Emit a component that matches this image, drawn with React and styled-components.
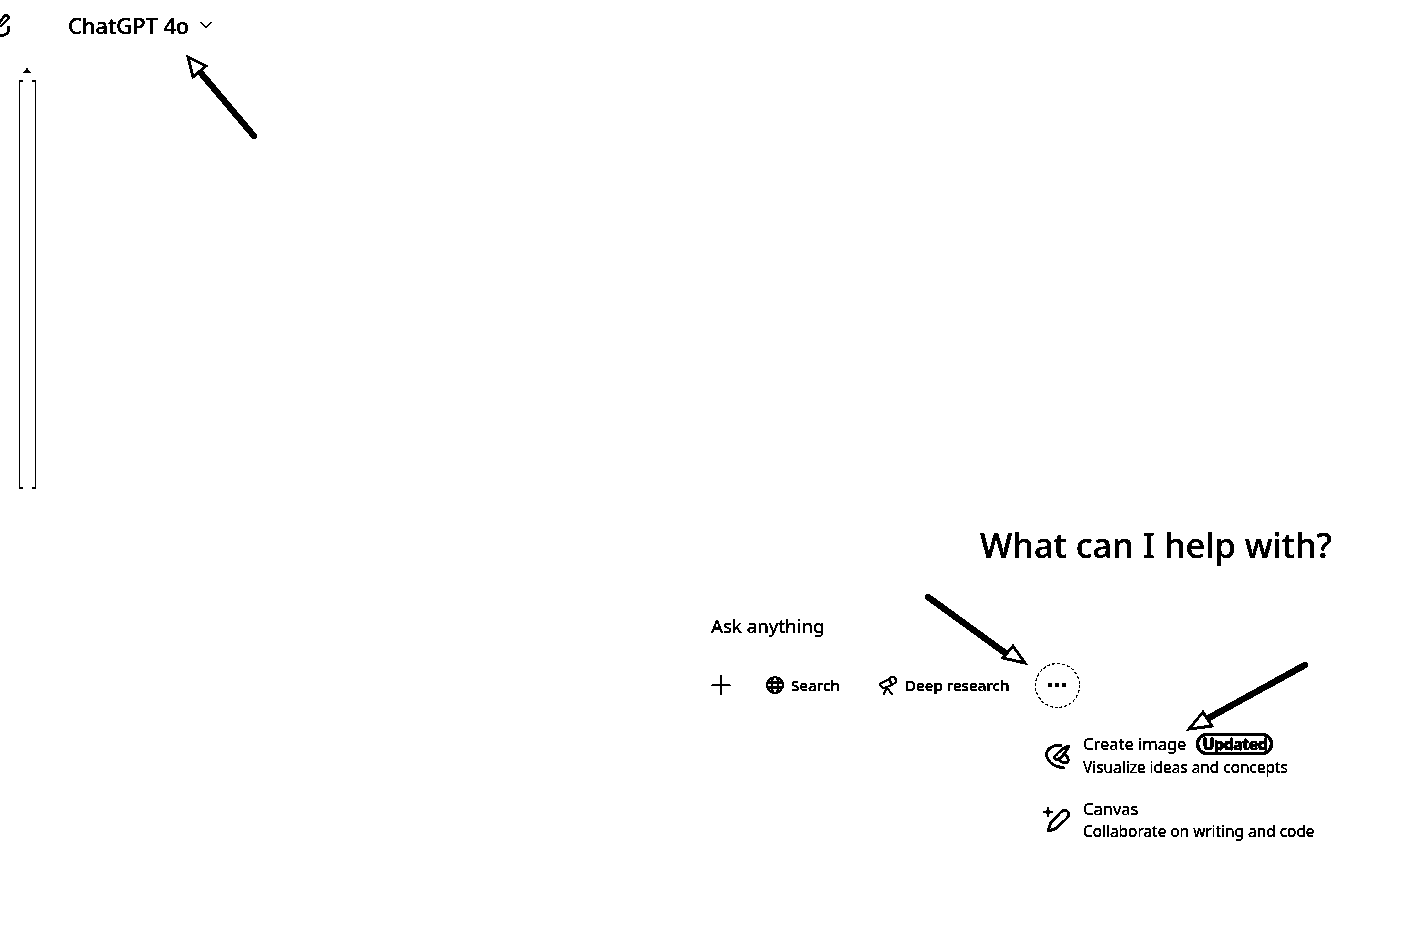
import React from 'react';
import styled, { createGlobalStyle } from 'styled-components';
import { ChevronDown } from 'lucide-react';

const GlobalStyle = createGlobalStyle`
  html, body {
    margin: 0;
    background: #fff;
    color: #000;
    font-family: "Noto Sans", "Open Sans", sans-serif;
  }
`;

// The whole reference is a 1-bit image, so push the antialiasing through a threshold.
const ThresholdFilter = () => (
  <HiddenSvg aria-hidden="true">
    <filter id="one-bit" colorInterpolationFilters="sRGB">
      <feColorMatrix type="saturate" values="0" />
      <feComponentTransfer>
        <feFuncR type="discrete" tableValues="0 0 0 1" />
        <feFuncG type="discrete" tableValues="0 0 0 1" />
        <feFuncB type="discrete" tableValues="0 0 0 1" />
      </feComponentTransfer>
    </filter>
  </HiddenSvg>
);

const Arrow = ({ from, to, head }) => (
  <g>
    <line x1={from[0]} y1={from[1]} x2={to[0]} y2={to[1]} stroke="#000" strokeWidth="6" strokeLinecap="round" />
    <polygon points={head} fill="#fff" stroke="#000" strokeWidth="2.5" />
  </g>
);

const App = () => (
  <Page>
    <GlobalStyle />
    <ThresholdFilter />
    <Header>
      <ClipIcon viewBox="0 0 10 24" fill="none" stroke="#000" strokeWidth="2.2" strokeLinecap="round">
        <path d="M-1 11L3.500 4C5.500 1 9.500 2 8.500 5.500L1 13" />
        <path d="M8.500 14V17C8.500 21 4 23 -1 22.500" />
      </ClipIcon>
      <ModelName>ChatGPT 4o</ModelName>
      <ChevronDown size={20} strokeWidth={1.2} />
    </Header>

    <Scrollbar>
      <ScrollArrow />
      <ScrollTrack />
    </Scrollbar>

    <Heading>What can I help with?</Heading>

    <Composer>
      <Prompt>Ask anything</Prompt>
      <Tools>
        <PlusIcon viewBox="0 0 20 20" stroke="#000" strokeLinecap="round">
          <path d="M1 10H19" strokeWidth="1.2" />
          <path d="M10 1V19" strokeWidth="2.4" />
        </PlusIcon>
        <Tool $left={35}>
          <svg width="18" height="18" viewBox="0 0 18 18" fill="none" stroke="#000" strokeWidth="1.5">
            <circle cx="9" cy="9" r="8" />
            <ellipse cx="9" cy="9" rx="3.5" ry="8" />
            <path d="M1 6.5H17M1 11.5H17" />
          </svg>
          Search
        </Tool>
        <Tool $left={38}>
          <svg width="20" height="20" viewBox="0 0 20 20" fill="none" stroke="#000" strokeWidth="1.8" strokeLinejoin="round" strokeLinecap="round">
            <path d="M1.500 9L11 4L14 10L5 13.500Z" />
            <path d="M11 4C12 1 17 1 18 5C18.500 8 16 9 13.500 9" />
            <path d="M8.500 12.500L6 19M8.500 12.500L14 19" />
          </svg>
          Deep research
        </Tool>
        <MoreButton>
          <Dot />
          <Dot />
          <Dot />
        </MoreButton>
      </Tools>

      <Menu>
        <MenuItem>
          <MenuIcon viewBox="0 0 28 28" fill="none" stroke="#000" strokeWidth="2.4" strokeLinecap="round" strokeLinejoin="round">
            <path d="M19 3.500C14 3 11 3.500 8 6C5 8.500 3 12 6 17C8 20.500 11 23 14 24C17 25 20 25.500 22 26" />
            <path d="M27 4C23 5 19 8 16 11C14 13 12 15 12 16C13 18 15.500 18 17 17C19 15.500 21 13.500 22 12C24 9.500 26 7 27 4Z" />
            <path d="M22 12C25 14 26.500 17 26 19C25 21.500 22 21.500 20 20C18.500 19 17.500 18 17 17" />
          </MenuIcon>
          <MenuText>
            <TitleRow>
              <MenuTitle>Create image</MenuTitle>
              <Badge>Updated</Badge>
            </TitleRow>
            <MenuSub>Visualize ideas and concepts</MenuSub>
          </MenuText>
        </MenuItem>
        <MenuItem>
          <MenuIcon viewBox="0 0 28 28" fill="none" stroke="#000" strokeWidth="2.4" strokeLinejoin="round">
            <path d="M6 25L8.500 17L19 6C21 3.500 25 4 26.500 6.500C27.500 9 26 10.500 25 12L14 22.500Z" />
            <path d="M6 1.500C6.500 4.500 7 5 10.500 6C7 7 6.500 7.500 6 10.500C5.500 7.500 5 7 1.500 6C5 5 5.500 4.500 6 1.500Z" fill="#000" strokeWidth="0.6" />
          </MenuIcon>
          <MenuText>
            <MenuTitle>Canvas</MenuTitle>
            <MenuSub>Collaborate on writing and code</MenuSub>
          </MenuText>
        </MenuItem>
      </Menu>
    </Composer>

    <Arrows viewBox="0 0 1412 925">
      <Arrow from={[254, 136]} to={[200, 72]} head="188,57 206,66 193,77" />
      <Arrow from={[928, 597]} to={[1008, 655]} head="1025,663 1003,658 1013,646" />
      <Arrow from={[1305, 665]} to={[1205, 720]} head="1189,729 1212,726 1203,712" />
    </Arrows>
  </Page>
);

const HiddenSvg = styled.svg`
  position: absolute;
  width: 0;
  height: 0;
`;

const Page = styled.div`
  position: relative;
  width: 1412px;
  height: 925px;
  overflow: hidden;
  background: #fff;
  filter: url(#one-bit);
`;

const Header = styled.header`
  display: flex;
  align-items: center;
  height: 50px;
`;

const ClipIcon = styled.svg`
  width: 10px;
  height: 24px;
  overflow: hidden;
  margin-right: 58px;
`;

const ModelName = styled.span`
  font-size: 21.8px;
  font-weight: 500;
  margin-right: 7px;
`;

const Scrollbar = styled.div`
  display: flex;
  flex-direction: column;
  align-items: center;
  width: 18px;
  margin: 18px 0 0 18px;
`;

const ScrollArrow = styled.div`
  width: 0;
  height: 0;
  border-left: 4px solid transparent;
  border-right: 4px solid transparent;
  border-bottom: 5px solid #000;
  margin-bottom: 7px;
`;

const ScrollTrack = styled.div`
  position: relative;
  box-sizing: border-box;
  width: 17px;
  height: 409px;
  border-left: 1px solid #000;
  border-right: 1px solid #000;

  &::before,
  &::after {
    content: '';
    position: absolute;
    left: 0;
    right: 0;
    height: 2px;
    background: linear-gradient(to right, #000 3px, transparent 3px, transparent calc(100% - 3px), #000 calc(100% - 3px));
  }
  &::before {
    top: 0;
  }
  &::after {
    bottom: 0;
  }
`;

const Heading = styled.h1`
  margin: 34px 0 0 980px;
  font-size: 34.4px;
  line-height: 44px;
  font-weight: 500;
  white-space: nowrap;
`;

const Composer = styled.section`
  margin: 45px 0 0 711px;
`;

const Prompt = styled.div`
  font-size: 18.7px;
  line-height: 28px;
`;

const Tools = styled.div`
  display: flex;
  align-items: center;
  height: 46px;
  margin-top: 22px;
`;

const PlusIcon = styled.svg`
  width: 20px;
  height: 20px;
`;

const Tool = styled.div`
  display: flex;
  align-items: center;
  gap: 7px;
  margin-left: ${(props) => props.$left}px;
  font-size: 15.2px;
  font-weight: 500;
  white-space: nowrap;
`;

const MoreButton = styled.div`
  display: flex;
  align-items: center;
  justify-content: center;
  gap: 3px;
  box-sizing: border-box;
  width: 45px;
  height: 45px;
  margin-left: 25px;
  border: 1px dashed #000;
  border-radius: 50%;
`;

const Dot = styled.span`
  width: 4px;
  height: 4px;
  border-radius: 50%;
  background: #000;
`;

const Menu = styled.div`
  display: flex;
  flex-direction: column;
  gap: 20px;
  margin: 25px 0 0 331px;
`;

const MenuItem = styled.div`
  display: flex;
  align-items: center;
  gap: 13px;
`;

const MenuIcon = styled.svg`
  width: 28px;
  height: 28px;
`;

const MenuText = styled.div`
  display: flex;
  flex-direction: column;
  gap: 1px;
`;

const TitleRow = styled.div`
  display: flex;
  align-items: center;
  gap: 10px;
  margin-bottom: 1px;
`;

const MenuTitle = styled.div`
  font-size: 16.5px;
  line-height: 22px;
`;

// The letters run into each other and nearly touch the ring in the reference.
const Badge = styled.span`
  box-sizing: border-box;
  display: flex;
  align-items: center;
  justify-content: center;
  width: 77px;
  height: 22px;
  border: 3px solid #000;
  border-radius: 11px;
  font-size: 16px;
  font-weight: 700;
  letter-spacing: -0.5px;
  -webkit-text-stroke: 0.4px #000;
  white-space: nowrap;
`;

const MenuSub = styled.div`
  font-size: 15.4px;
  line-height: 21px;
`;

const Arrows = styled.svg`
  position: absolute;
  inset: 0;
  width: 1412px;
  height: 925px;
  pointer-events: none;
`;

export default App;
